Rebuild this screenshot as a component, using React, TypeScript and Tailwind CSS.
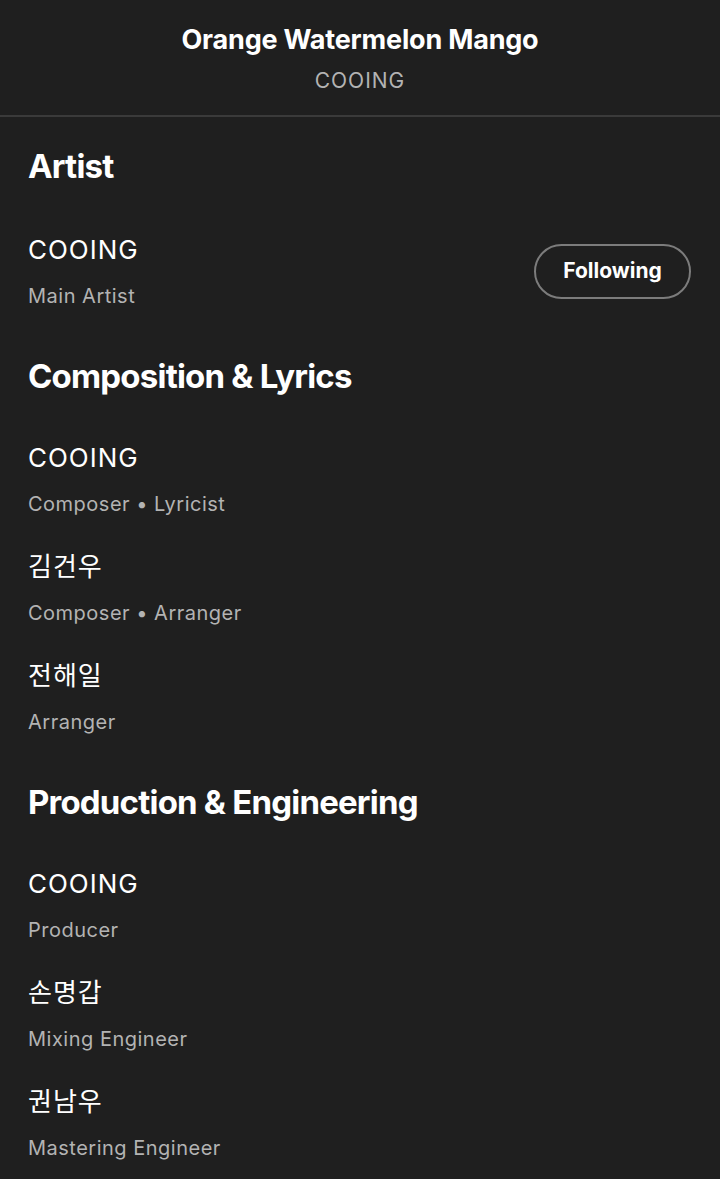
const sections = [
  {
    title: "Artist",
    people: [{ name: "COOING", role: "Main Artist", follow: true }],
  },
  {
    title: "Composition & Lyrics",
    people: [
      { name: "COOING", role: "Composer • Lyricist" },
      { name: "김건우", role: "Composer • Arranger" },
      { name: "전해일", role: "Arranger" },
    ],
  },
  {
    title: "Production & Engineering",
    people: [
      { name: "COOING", role: "Producer" },
      { name: "손명갑", role: "Mixing Engineer" },
      { name: "권남우", role: "Mastering Engineer" },
    ],
  },
];

const font = "font-['Inter','Noto_Sans_CJK_KR',sans-serif]";

export default function App() {
  return (
    <div className={`w-full min-h-[1179px] bg-[#1f1f1f] text-white ${font}`}>
      {/* Header */}
      <header className="h-[117px] border-b-2 border-[#3a3a3a] flex flex-col items-center pt-[22px]">
        <h1 className="text-[27px] leading-[36px] font-bold tracking-[-0.2px]">Orange Watermelon Mango</h1>
        <div className="text-[21px] leading-[30px] text-[#b3b3b3] mt-[8px] tracking-[1px]">COOING</div>
      </header>

      {/* Credits */}
      <main className="px-7 pt-[29px] flex flex-col gap-[46px]">
        {sections.map((s, i) => (
          <section key={i} className="flex flex-col">
            <h2 className="text-[33px] leading-[40px] font-bold tracking-[-0.8px]">{s.title}</h2>
            <ul className={`flex flex-col gap-[31px] ${i === 0 ? "mt-[46px]" : "mt-[44px]"}`}>
              {s.people.map((p, j) => (
                <li key={j} className="flex items-center justify-between">
                  <div className="flex flex-col">
                    <div className="text-[26px] leading-[36px] tracking-[1px]">{p.name}</div>
                    <div className="text-[20px] leading-[28px] text-[#b3b3b3] mt-[14px] tracking-[0.5px]">{p.role}</div>
                  </div>
                  {"follow" in p && p.follow && (
                    <button className="h-[55px] w-[157px] mr-[1px] rounded-full border-2 border-[#7c7c7c] text-[21px] font-bold">
                      Following
                    </button>
                  )}
                </li>
              ))}
            </ul>
          </section>
        ))}
      </main>
    </div>
  );
}
